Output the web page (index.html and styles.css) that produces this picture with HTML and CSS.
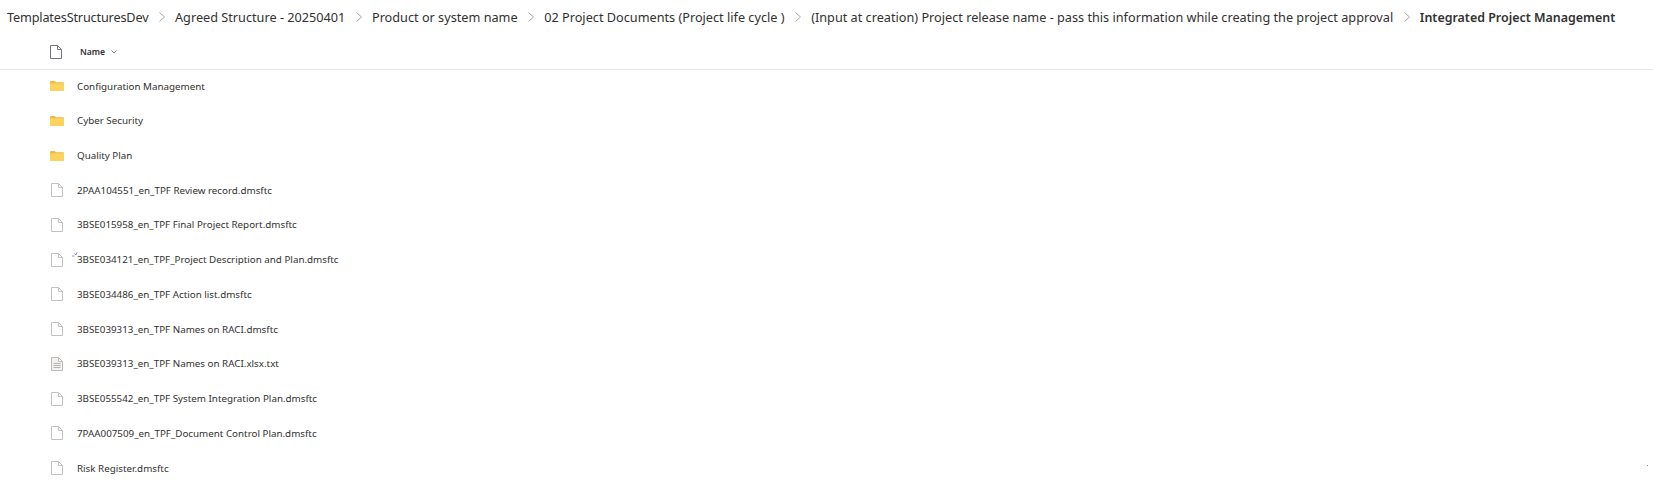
FILE: index.html
```html
<!DOCTYPE html>
<html lang="en">
<head>
<meta charset="utf-8">
<title>Integrated Project Management</title>
<link rel="stylesheet" href="styles.css">
</head>
<body>
<svg class="defs" aria-hidden="true">
  <symbol id="folder" viewBox="0 0 14 10">
    <path d="M0 1q0-1 1-1h3.6l1.4 1.2h7q1 0 1 1V9q0 1-1 1H1q-1 0-1-1z" fill="#f2b93a"/>
    <path d="M0 2.2h14V9q0 1-1 1H1q-1 0-1-1z" fill="#fdd35f"/>
  </symbol>
  <symbol id="file" viewBox="0 0 12 14">
    <path d="M.5.5h7l4 4v9H.5zM7.5.5v4h4" fill="#fff" stroke="#c4c2c0"/>
  </symbol>
  <symbol id="head-file" viewBox="0 0 12 14">
    <path d="M.5.5h7l4 4v9H.5zM7.5.5v4h4" fill="#fff" stroke="#75757f"/>
  </symbol>
  <symbol id="txt" viewBox="0 0 12 14">
    <path d="M.5.5h7l4 4v9H.5zM7.5.5v4h4" fill="#f3f2f1" stroke="#bdbbb9"/>
    <path d="M2.5 6.5h7M2.5 8.5h7M2.5 10.5h7" stroke="#b5b3b1"/>
  </symbol>
  <symbol id="chevron" viewBox="0 0 6 10">
    <path d="M.5.5l5 4.5-5 4.5" fill="none" stroke="#a8a6a4"/>
  </symbol>
</svg>
<nav class="crumbs">
  <span class="crumb root">TemplatesStructuresDev</span><svg class="sep"><use href="#chevron"/></svg>
  <span class="crumb">Agreed Structure - 20250401</span><svg class="sep"><use href="#chevron"/></svg>
  <span class="crumb">Product or system name</span><svg class="sep"><use href="#chevron"/></svg>
  <span class="crumb">02 Project Documents (Project life cycle )</span><svg class="sep"><use href="#chevron"/></svg>
  <span class="crumb">(Input at creation) Project release name - pass this information while creating the project approval</span><svg class="sep"><use href="#chevron"/></svg>
  <span class="crumb current">Integrated Project Management</span>
</nav>
<div class="head">
  <svg class="file-icon head-icon"><use href="#head-file"/></svg>
  <span class="head-name">Name</span>
  <svg class="chev" viewBox="0 0 6 4"><path d="M.5.5L3 3 5.500.5" fill="none" stroke="#605e5c" stroke-width=".8"/></svg>
</div>
<ul class="list">
  <li class="row"><svg class="folder-icon"><use href="#folder"/></svg><span class="name">Configuration Management</span></li>
  <li class="row"><svg class="folder-icon"><use href="#folder"/></svg><span class="name">Cyber Security</span></li>
  <li class="row"><svg class="folder-icon"><use href="#folder"/></svg><span class="name">Quality Plan</span></li>
  <li class="row"><svg class="file-icon"><use href="#file"/></svg><span class="name">2PAA104551_en_TPF Review record.dmsftc</span></li>
  <li class="row"><svg class="file-icon"><use href="#file"/></svg><span class="name">3BSE015958_en_TPF Final Project Report.dmsftc</span></li>
  <li class="row"><svg class="file-icon"><use href="#file"/></svg><span class="name marked">3BSE034121_en_TPF_Project Description and Plan.dmsftc<svg class="mark" viewBox="0 0 6 5"><path d="M0 4h2.500M2.500 1.500L4 3 5 .5" fill="none" stroke="#7a6fd0" stroke-width=".8"/></svg></span></li>
  <li class="row"><svg class="file-icon"><use href="#file"/></svg><span class="name">3BSE034486_en_TPF Action list.dmsftc</span></li>
  <li class="row"><svg class="file-icon"><use href="#file"/></svg><span class="name">3BSE039313_en_TPF Names on RACI.dmsftc</span></li>
  <li class="row"><svg class="file-icon"><use href="#txt"/></svg><span class="name">3BSE039313_en_TPF Names on RACI.xlsx.txt</span></li>
  <li class="row"><svg class="file-icon"><use href="#file"/></svg><span class="name">3BSE055542_en_TPF System Integration Plan.dmsftc</span></li>
  <li class="row"><svg class="file-icon"><use href="#file"/></svg><span class="name">7PAA007509_en_TPF_Document Control Plan.dmsftc</span></li>
  <li class="row"><svg class="file-icon"><use href="#file"/></svg><span class="name">Risk Register.dmsftc</span></li>
</ul>
<div class="speck"></div>
</body>
</html>
```
FILE: styles.css
```css
* { box-sizing: border-box; }
html, body { margin: 0; padding: 0; background: #fff; }
body { position: relative; font-family: "Noto Sans", "Open Sans", sans-serif; color: #323130; width: 1653px; height: 504px; overflow: hidden; }
.defs { display: none; }
.crumbs { display: flex; align-items: center; height: 34px; padding-left: 7px; font-size: 12.7px; white-space: nowrap; }
.crumb { color: #323130; }
.root { letter-spacing: -0.17px; }
.current { font-weight: 600; font-size: 12.45px; }
.sep { width: 6px; height: 10px; margin: 0 10px 0 10.6px; flex: none; }
.head { display: flex; align-items: center; height: 36px; padding-left: 50px; border-bottom: 1px solid #e8e7e6; }
.head-name { margin-left: 18px; font-size: 8.6px; font-weight: 600; }
.chev { width: 6px; height: 4px; margin-left: 6px; }
.head-icon { height: 13px; }
.file-icon { width: 12px; height: 14px; flex: none; }
.folder-icon { width: 14px; height: 10px; flex: none; margin-left: -1px; margin-right: -1px; }
.list { list-style: none; margin: 0; padding: 0; }
.row { display: flex; align-items: center; height: 34.73px; padding-left: 51px; padding-bottom: 2.5px; font-size: 9.8px; }
.name { margin-left: 14px; }
.marked { position: relative; }
.mark { position: absolute; left: -5px; top: -1px; width: 6px; height: 5px; }
.speck { position: absolute; left: 1647px; top: 465px; width: 1px; height: 1px; background: #8a8886; }
```
